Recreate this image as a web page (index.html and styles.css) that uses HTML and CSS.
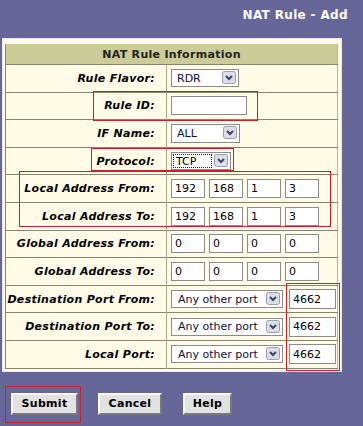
FILE: index.html
```html
<!DOCTYPE html>
<html lang="en">
<head>
    <meta charset="UTF-8">
    <title>NAT Rule - Add</title>
    <link rel="stylesheet" href="styles.css">
</head>
<body>
<div class="page">
    <div class="page-title">NAT Rule - Add</div>

    <div class="panel">
        <table class="info">
            <tr><th colspan="2" class="info-head">NAT Rule Information</th></tr>
            <tr>
                <td class="lbl">Rule Flavor:</td>
                <td class="fld">
                    <span class="dd dd-flavor">
                        <select><option>RDR</option></select>
                        <span class="dd-btn"><svg width="14" height="13" viewBox="0 0 14 13"><rect x="0.5" y="0.5" width="13" height="12" rx="2" fill="#dcdde6" stroke="#9a9eb4"/><polyline points="4,5 7,8 10,5" fill="none" stroke="#3d4566" stroke-width="2"/></svg></span>
                    </span>
                </td>
            </tr>
            <tr>
                <td class="lbl">Rule ID:</td>
                <td class="fld"><input type="text" class="txt txt-id" value=""></td>
            </tr>
            <tr>
                <td class="lbl">IF Name:</td>
                <td class="fld">
                    <span class="dd dd-if">
                        <select><option>ALL</option></select>
                        <span class="dd-btn"><svg width="14" height="13" viewBox="0 0 14 13"><rect x="0.5" y="0.5" width="13" height="12" rx="2" fill="#dcdde6" stroke="#9a9eb4"/><polyline points="4,5 7,8 10,5" fill="none" stroke="#3d4566" stroke-width="2"/></svg></span>
                    </span>
                </td>
            </tr>
            <tr>
                <td class="lbl">Protocol:</td>
                <td class="fld">
                    <span class="dd dd-proto">
                        <select><option>TCP</option></select>
                        <span class="dd-focus"></span>
                        <span class="dd-btn"><svg width="14" height="13" viewBox="0 0 14 13"><rect x="0.5" y="0.5" width="13" height="12" rx="2" fill="#dcdde6" stroke="#9a9eb4"/><polyline points="4,5 7,8 10,5" fill="none" stroke="#3d4566" stroke-width="2"/></svg></span>
                    </span>
                </td>
            </tr>
            <tr>
                <td class="lbl">Local Address From:</td>
                <td class="fld">
                    <input type="text" class="txt ip" value="192"><input type="text" class="txt ip" value="168"><input type="text" class="txt ip" value="1"><input type="text" class="txt ip" value="3">
                </td>
            </tr>
            <tr>
                <td class="lbl">Local Address To:</td>
                <td class="fld">
                    <input type="text" class="txt ip" value="192"><input type="text" class="txt ip" value="168"><input type="text" class="txt ip" value="1"><input type="text" class="txt ip" value="3">
                </td>
            </tr>
            <tr>
                <td class="lbl">Global Address From:</td>
                <td class="fld">
                    <input type="text" class="txt ip" value="0"><input type="text" class="txt ip" value="0"><input type="text" class="txt ip" value="0"><input type="text" class="txt ip" value="0">
                </td>
            </tr>
            <tr>
                <td class="lbl">Global Address To:</td>
                <td class="fld">
                    <input type="text" class="txt ip" value="0"><input type="text" class="txt ip" value="0"><input type="text" class="txt ip" value="0"><input type="text" class="txt ip" value="0">
                </td>
            </tr>
            <tr>
                <td class="lbl">Destination Port From:</td>
                <td class="fld">
                    <span class="dd dd-port">
                        <select><option>Any other port</option></select>
                        <span class="dd-btn"><svg width="14" height="13" viewBox="0 0 14 13"><rect x="0.5" y="0.5" width="13" height="12" rx="2" fill="#dcdde6" stroke="#9a9eb4"/><polyline points="4,5 7,8 10,5" fill="none" stroke="#3d4566" stroke-width="2"/></svg></span>
                    </span><input type="text" class="txt port" value="4662">
                </td>
            </tr>
            <tr>
                <td class="lbl">Destination Port To:</td>
                <td class="fld">
                    <span class="dd dd-port">
                        <select><option>Any other port</option></select>
                        <span class="dd-btn"><svg width="14" height="13" viewBox="0 0 14 13"><rect x="0.5" y="0.5" width="13" height="12" rx="2" fill="#dcdde6" stroke="#9a9eb4"/><polyline points="4,5 7,8 10,5" fill="none" stroke="#3d4566" stroke-width="2"/></svg></span>
                    </span><input type="text" class="txt port" value="4662">
                </td>
            </tr>
            <tr>
                <td class="lbl">Local Port:</td>
                <td class="fld">
                    <span class="dd dd-port">
                        <select><option>Any other port</option></select>
                        <span class="dd-btn"><svg width="14" height="13" viewBox="0 0 14 13"><rect x="0.5" y="0.5" width="13" height="12" rx="2" fill="#dcdde6" stroke="#9a9eb4"/><polyline points="4,5 7,8 10,5" fill="none" stroke="#3d4566" stroke-width="2"/></svg></span>
                    </span><input type="text" class="txt port" value="4662">
                </td>
            </tr>
        </table>
    </div>

    <div class="actions">
        <button type="submit" class="btn btn-submit">Submit</button>
        <button type="button" class="btn btn-cancel">Cancel</button>
        <button type="button" class="btn btn-help">Help</button>
    </div>

    <!-- red annotation boxes -->
    <div class="mark mark-ruleid"></div>
    <div class="mark mark-proto"></div>
    <div class="mark mark-local"></div>
    <div class="mark mark-port"></div>
    <div class="mark mark-submit"></div>
</div>
</body>
</html>
```

FILE: styles.css
```css
body {
    margin: 0;
    padding: 0;
    background-color: #666699;
    font-family: "DejaVu Sans", Verdana, sans-serif;
    font-size: 11px;
    color: #000;
}

.page {
    position: relative;
    width: 363px;
    height: 426px;
    overflow: hidden;
}

.page-title {
    box-sizing: border-box;
    height: 38px;
    padding: 8px 15px 0 0;
    text-align: right;
    font-size: 12px;
    line-height: 14px;
    font-weight: bold;
    letter-spacing: 0.35px;
    color: #fff;
}

/* Info panel */
.panel {
    box-sizing: border-box;
    width: 340px;
    margin-left: 2px;
    padding: 5px 3px 2px 2px;
    background-color: #fffbe6;
    border: 1px solid #e9e7f2;
}

.info {
    width: 333px;
    border-collapse: collapse;
    border-left: 1px solid #86866a;
    border-right: 1px solid #b8b89e;
    border-bottom: 1px solid #86866a;
}

.info-head {
    height: 20px;
    padding: 0;
    background-color: #cccc99;
    border-bottom: 1px solid #86866a;
    font-size: 11px;
    font-weight: bold;
    letter-spacing: 0.3px;
    color: #222;
    text-align: center;
}

.info td {
    height: 26.6px;
    padding: 0;
    border-top: 1px solid #86866a;
    vertical-align: middle;
    background-color: #fffbe6;
}

.info td.lbl {
    width: 149px;
    padding-right: 11px;
    border-right: 1px solid #a6a68c;
    text-align: right;
    font-weight: bold;
    font-style: oblique 14deg;
    letter-spacing: 0.3px;
    white-space: nowrap;
}

.info td.fld {
    padding-left: 4px;
    white-space: nowrap;
    font-size: 0;
}

/* Form controls */
.txt {
    box-sizing: border-box;
    height: 19px;
    margin: 0;
    padding: 0 0 0 3px;
    border: 1px solid #8c8c8c;
    background-color: #fff;
    font-family: "DejaVu Sans", Verdana, sans-serif;
    font-size: 11px;
    color: #000;
    vertical-align: middle;
}

.txt-id {
    width: 76px;
}

.ip {
    width: 34px;
    margin-right: 4px;
}

.port {
    width: 47px;
    height: 20px;
    margin-left: 6px;
}

.dd {
    position: relative;
    display: inline-block;
    vertical-align: middle;
}

.dd select {
    -webkit-appearance: none;
    appearance: none;
    box-sizing: border-box;
    display: block;
    height: 18px;
    margin: 0;
    padding: 0 0 0 5px;
    border: 1px solid #8c8c8c;
    border-radius: 0;
    background-color: #fff;
    font-family: "DejaVu Sans", Verdana, sans-serif;
    font-size: 11px;
    color: #10103a;
}

.dd-btn {
    position: absolute;
    top: 2px;
    right: 3px;
    width: 14px;
    height: 13px;
    pointer-events: none;
}

.dd-btn svg {
    display: block;
}

.dd-flavor select { width: 68px; }
.dd-if select { width: 69px; height: 19px; }
.dd-proto select { width: 60px; color: #000; padding-left: 4px; }
.dd-port select { width: 112px; padding-left: 6px; }

.dd-focus {
    position: absolute;
    top: 2px;
    left: 2px;
    width: 39px;
    height: 14px;
    box-sizing: border-box;
    border: 1px dotted #222;
    pointer-events: none;
}

/* Buttons */
.actions {
    display: flex;
    padding: 21px 0 0 11px;
}

.btn {
    box-sizing: border-box;
    height: 22px;
    margin: 0 20px 0 0;
    padding: 0;
    background-color: #e2e2e2;
    border: 2px solid;
    border-color: #fafafa #7a7a7a #7a7a7a #fafafa;
    font-family: "DejaVu Sans", Verdana, sans-serif;
    font-size: 11px;
    font-weight: bold;
    letter-spacing: 0.3px;
    color: #000;
}

.btn-submit { width: 67px; }
.btn-cancel { width: 64px; margin-right: 21px; }
.btn-help { width: 49px; }

/* Red annotation boxes */
.mark {
    position: absolute;
    box-sizing: border-box;
    border: 1px solid #c4222e;
    pointer-events: none;
}

.mark-ruleid { left: 93px; top: 91px; width: 165px; height: 30px; }
.mark-proto { left: 91px; top: 148px; width: 143px; height: 23px; }
.mark-local { left: 19px; top: 171px; width: 312px; height: 56px; }
.mark-port { left: 286px; top: 283px; width: 54px; height: 88px; }
.mark-submit { left: 5px; top: 386px; width: 76px; height: 37px; }
```
